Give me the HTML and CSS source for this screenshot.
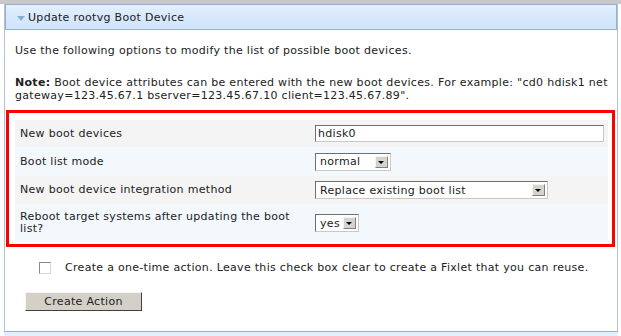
FILE: index.html
```html
<!DOCTYPE html>
<html>
<head>
  <meta charset="UTF-8">
  <title>Update rootvg Boot Device</title>
  <link rel="stylesheet" href="styles.css">
</head>
<body>
  <div class="topbar"></div>
  <div class="panel">
    <div class="panel-head">
      <span class="twisty"></span>
      <span>Update rootvg Boot Device</span>
    </div>
    <div class="panel-body">
      <p class="intro">Use the following options to modify the list of possible boot devices.</p>
      <div class="note">
        <div><b>Note:</b> <span>Boot device attributes can be entered with the new boot devices. For example: "cd0 hdisk1 net</span></div>
        <div>gateway=123.45.67.1 bserver=123.45.67.10 client=123.45.67.89".</div>
      </div>

      <div class="highlight">
        <div class="opt-row odd r1">
          <label for="devices">New boot devices</label>
          <input type="text" id="devices" class="text-in" value="hdisk0">
        </div>
        <div class="opt-row even r2">
          <label>Boot list mode</label>
          <div class="combo w-mode"><span class="combo-val">normal</span><span class="combo-btn"></span></div>
        </div>
        <div class="opt-row odd r3">
          <label>New boot device integration method</label>
          <div class="combo w-method"><span class="combo-val">Replace existing boot list</span><span class="combo-btn"></span></div>
        </div>
        <div class="opt-row even r4">
          <label>Reboot target systems after updating the boot list?</label>
          <div class="combo w-yes"><span class="combo-val">yes</span><span class="combo-btn"></span></div>
        </div>
      </div>

      <div class="check-line">
        <span class="check"></span>
        <span>Create a one-time action. Leave this check box clear to create a Fixlet that you can reuse.</span>
      </div>
      <button type="button" class="action-btn">Create Action</button>
    </div>
  </div>
  <div class="next-panel"></div>
</body>
</html>
```

FILE: styles.css
```css
/* Verdana-like text everywhere */
body, input, button, label {
  font-family: 'DejaVu Sans', Verdana, sans-serif;
  font-size: 11px;
  letter-spacing: 0.3px;
  color: #222;
}
body {
  margin: 0;
  background: #fff;
  width: 621px;
  height: 336px;
  overflow: hidden;
}
.topbar {
  height: 4px;
  background: #c8c8c8;
}
.panel {
  margin: 0 3px 0 4px;
  border-left: 1px solid #b3c0d0;
  border-right: 1px solid #b3c0d0;
}
.panel-head {
  height: 24px;
  border: 1px solid #98b0cc;
  background: linear-gradient(#e2efff, #cfe3fa);
  display: flex;
  align-items: center;
  padding-left: 11px;
  color: #1a1a1a;
}
/* small down-pointing twisty */
.twisty {
  width: 0;
  height: 0;
  border-left: 4px solid transparent;
  border-right: 4px solid transparent;
  border-top: 5px solid #86aedb;
  margin-right: 3px;
  margin-top: 2px;
}
.panel-body {
  padding: 14px 2px 20px 1px;
}
.intro {
  margin: 0 0 18px 9px;
  line-height: 14px;
}
.note {
  margin: 0 0 8px 9px;
  line-height: 13px;
  white-space: nowrap;
}
/* red box around the options table */
.highlight {
  border: 3px solid #ff0000;
  padding: 7px 4px 2px 6px;
}
.opt-row {
  display: flex;
  align-items: center;
}
.r1 { height: 27px; }
.r2 { height: 29px; }
.r3 { height: 28px; }
.r4 { height: 38px; }
.opt-row.odd {
  background: #f4f4f4;
}
.opt-row.even {
  background: #f3f8fd;
}
.opt-row label {
  width: 300px;
  padding: 0 25px 0 5px;
  box-sizing: border-box;
  line-height: 12px;
}
.text-in {
  width: 289px;
  height: 17px;
  padding: 0 2px;
  border: 1px solid #c8c8c8;
  border-top-color: #6f6f6f;
  border-left-color: #6f6f6f;
  box-sizing: border-box;
}
.combo {
  display: flex;
  height: 18px;
  box-sizing: border-box;
  border: 1px solid #c8c8c8;
  border-top-color: #6f6f6f;
  border-left-color: #6f6f6f;
  background: #fff;
  align-items: center;
}
.combo-val {
  flex: 1;
  padding-left: 4px;
}
.combo-btn {
  width: 13px;
  height: 12px;
  margin-right: 2px;
  background: #d6d3ce;
  border: 1px solid #f4f4f4;
  border-right-color: #808080;
  border-bottom-color: #808080;
  box-sizing: border-box;
  position: relative;
}
.combo-btn::after {
  content: '';
  position: absolute;
  left: 2px;
  top: 4px;
  border-left: 3px solid transparent;
  border-right: 3px solid transparent;
  border-top: 3px solid #000;
}
.w-mode { width: 76px; }
.w-method { width: 233px; }
.w-yes { width: 44px; }
.check-line {
  display: flex;
  align-items: center;
  line-height: 14px;
  margin: 14px 0 0 33px;
}
.check {
  width: 10px;
  height: 10px;
  border: 1px solid #8a8a8a;
  border-right-color: #d8d8d8;
  border-bottom-color: #d8d8d8;
  margin-right: 14px;
}
.action-btn {
  display: block;
  margin: 17px 0 0 19px;
  width: 117px;
  height: 19px;
  background: #d4d0c8;
  border: 1px solid #f4f4f4;
  border-right-color: #404040;
  border-bottom-color: #404040;
  padding: 0;
}
.next-panel {
  margin: 0 3px 0 4px;
  border-top: 1px solid #98b0cc;
  height: 20px;
  background: #e4f0ff;
}
```
